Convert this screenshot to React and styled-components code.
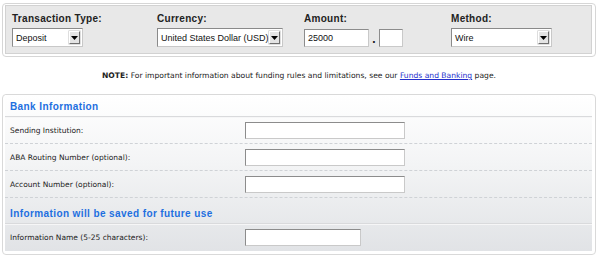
import React from "react";
import styled, { createGlobalStyle } from "styled-components";

const Global = createGlobalStyle`
  html, body { margin: 0; padding: 0; background: #fff; }
  body { font-family: "DejaVu Sans", Verdana, sans-serif; color: #222; }
`;

const Page = styled.div`
  width: 600px;
  padding: 3px 4px 0 2px;
  box-sizing: border-box;
`;

const Frame = styled.div`
  border: 1px solid #d6d6d6;
  border-radius: 4px;
  padding: 1px 3px 2px 2px;
  background: #fff;
`;

const TopGrid = styled.div`
  background: #e8e8e8;
  border: 1px solid #d2d2d2;
  display: grid;
  grid-template-columns: 145px 147px 147px 1fr;
  padding: 6px 0 6px 6px;
  row-gap: 2px;
`;

const Label = styled.div`
  font-family: "Liberation Sans", Arial, sans-serif;
  font-weight: bold;
  font-size: 10px;
  letter-spacing: 0.3px;
  color: #222;
  line-height: 14px;
`;

const SelectBox = styled.div`
  width: ${(p) => p.$w}px;
  height: 19px;
  box-sizing: border-box;
  background: #fff;
  border: 1px solid;
  border-color: #8a8a8a #c8c8c8 #c8c8c8 #8a8a8a;
  display: flex;
  align-items: center;
  justify-content: space-between;
  padding: 0 2px 0 3px;
  font-family: "Liberation Sans", Arial, sans-serif;
  font-size: 9px;
  color: #111;
  white-space: nowrap;
  overflow: hidden;
`;

const DropBtn = styled.span`
  flex: none;
  width: 11px;
  height: 13px;
  box-sizing: border-box;
  background: #e4e4e4;
  border: 1px solid;
  border-color: #fff #6f6f6f #6f6f6f #fff;
  box-shadow: 0 0 0 0.5px #bdbdbd;
  display: flex;
  align-items: center;
  justify-content: center;
`;

const AmountRow = styled.div`
  display: flex;
  align-items: center;
`;

const TextBox = styled.div`
  width: ${(p) => p.$w}px;
  height: ${(p) => p.$h || 17}px;
  box-sizing: border-box;
  background: #fff;
  border: 1px solid;
  border-color: #8c8c8c #c9c9c9 #c9c9c9 #8c8c8c;
  font-family: "Liberation Sans", Arial, sans-serif;
  font-size: 9px;
  color: #111;
  display: flex;
  align-items: center;
  padding-left: 3px;
`;

const Dot = styled.span`
  width: 10px;
  text-align: center;
  font-weight: bold;
  font-size: 10px;
  margin-top: 4px;
`;

const Note = styled.p`
  margin: 0;
  height: 37px;
  display: flex;
  align-items: center;
  justify-content: center;
  font-size: 7.6px;
  color: #222;
  white-space: pre;
  b { font-weight: bold; }
  a { color: #2430cc; text-decoration: underline; }
`;

const Panel = styled.div`
  border: 1px solid #d9d9d9;
  border-radius: 4px;
  padding: 0 3px 3px 2px;
  background: #fff;
`;

const PanelInner = styled.div`
  background: linear-gradient(#ffffff 0%, #f3f4f5 45%, #e1e3e6 100%);
`;

const SectionHead = styled.div`
  height: ${(p) => p.$h}px;
  box-sizing: border-box;
  border-bottom: 1px solid #d9dadc;
  box-shadow: 0 1px 0 #f6f6f7;
  display: flex;
  align-items: flex-end;
  padding: 0 0 4px 5px;
  font-family: "Liberation Sans", Arial, sans-serif;
  font-weight: bold;
  font-size: 10px;
  letter-spacing: 0.4px;
  color: #1d6fe0;
`;

const Row = styled.div`
  height: 27px;
  box-sizing: border-box;
  display: grid;
  grid-template-columns: 235px 1fr;
  align-items: center;
  padding-left: 5px;
  border-bottom: ${(p) => (p.$last ? "none" : "1px dashed #cfd2d6")};
`;

const RowLabel = styled.span`
  font-size: 7.5px;
  color: #222;
`;

const Arrow = () => (
  <svg width="7" height="4" viewBox="0 0 7 4">
    <path d="M0 0h7L3.5 4z" fill="#000" />
  </svg>
);

const Select = ({ w, value }) => (
  <SelectBox $w={w}>
    <span>{value}</span>
    <DropBtn>
      <Arrow />
    </DropBtn>
  </SelectBox>
);

export default function App() {
  return (
    <>
      <Global />
      <Page>
        <Frame>
          <TopGrid>
            <Label>Transaction Type:</Label>
            <Label>Currency:</Label>
            <Label>Amount:</Label>
            <Label>Method:</Label>
            <Select w={71} value="Deposit" />
            <Select w={126} value="United States Dollar (USD)" />
            <AmountRow>
              <TextBox $w={65} $h={18}>25000</TextBox>
              <Dot>.</Dot>
              <TextBox $w={24} $h={18} />
            </AmountRow>
            <Select w={101} value="Wire" />
          </TopGrid>
        </Frame>
        <Note>
          <b>NOTE:</b> For important information about funding rules and limitations, see our{" "}
          <a href="#">Funds and Banking</a> page.
        </Note>
        <Panel>
          <PanelInner>
            <SectionHead $h={22}>Bank Information</SectionHead>
            <Row>
              <RowLabel>Sending Institution:</RowLabel>
              <TextBox $w={160} />
            </Row>
            <Row>
              <RowLabel>ABA Routing Number (optional):</RowLabel>
              <TextBox $w={160} />
            </Row>
            <Row>
              <RowLabel>Account Number (optional):</RowLabel>
              <TextBox $w={160} />
            </Row>
            <SectionHead $h={26}>Information will be saved for future use</SectionHead>
            <Row $last>
              <RowLabel>Information Name (5-25 characters):</RowLabel>
              <TextBox $w={116} />
            </Row>
          </PanelInner>
        </Panel>
      </Page>
    </>
  );
}
